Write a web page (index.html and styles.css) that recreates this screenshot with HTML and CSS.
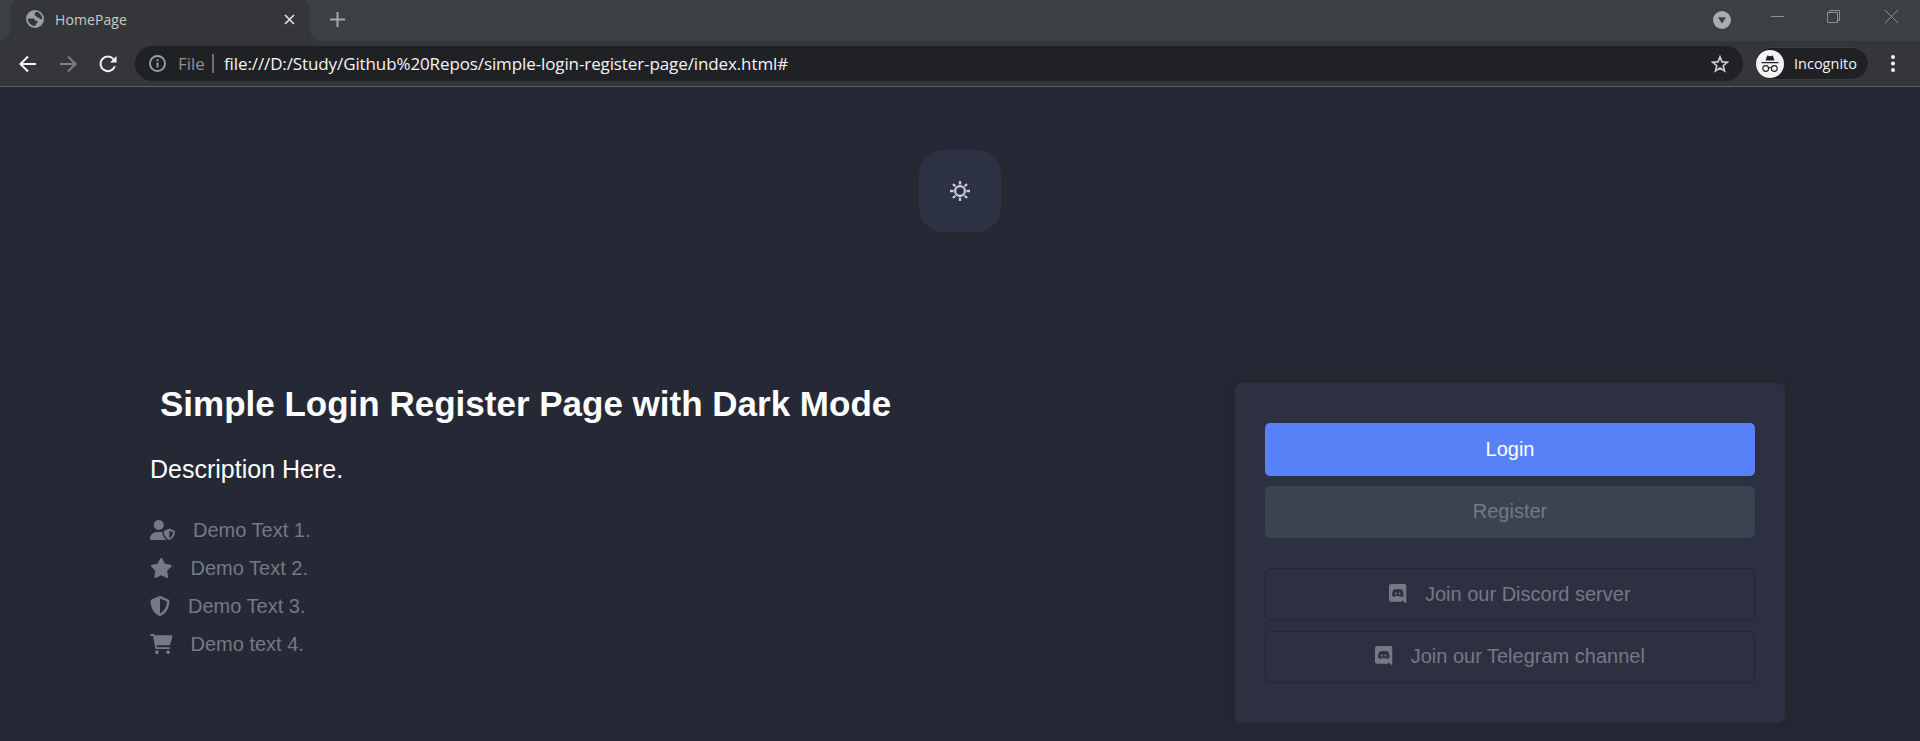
FILE: index.html
```html
<!DOCTYPE html>
<html lang="en">
<head>
<meta charset="utf-8">
<title>HomePage</title>
<link rel="stylesheet" href="styles.css">
</head>
<body>
<svg class="defs" width="0" height="0">
  <symbol id="discord" viewBox="0 0 448 512"><path d="M297.216 243.2c0 15.616-11.52 28.416-26.112 28.416-14.336 0-26.112-12.8-26.112-28.416s11.52-28.416 26.112-28.416c14.592 0 26.112 12.8 26.112 28.416zm-119.552-28.416c-14.592 0-26.112 12.8-26.112 28.416s11.776 28.416 26.112 28.416c14.592 0 26.112-12.8 26.112-28.416.256-15.616-11.52-28.416-26.112-28.416zM448 52.736V512c-64.494-56.994-43.868-38.128-118.784-107.776l13.568 47.36H52.48C23.552 451.584 0 428.032 0 398.848V52.736C0 23.552 23.552 0 52.48 0h343.04C424.448 0 448 23.552 448 52.736zm-72.96 242.688c0-82.432-36.864-149.248-36.864-149.248-36.864-27.648-71.936-26.88-71.936-26.88l-3.584 4.096c43.52 13.312 63.744 32.512 63.744 32.512-60.811-33.329-132.244-33.335-191.232-7.424-9.472 4.352-15.104 7.424-15.104 7.424s21.248-20.224 67.328-33.536l-2.56-3.072s-35.072-.768-71.936 26.88c0 0-36.864 66.816-36.864 149.248 0 0 21.504 37.12 78.08 38.912 0 0 9.472-11.52 17.152-21.248-32.512-9.728-44.8-30.208-44.8-30.208 3.766 2.636 9.976 6.053 10.496 6.4 43.21 24.198 104.588 32.126 159.744 8.96 8.96-3.328 18.944-8.192 29.44-15.104 0 0-12.8 20.992-46.336 30.464 7.68 9.728 16.896 20.736 16.896 20.736 56.576-1.792 78.336-38.912 78.336-38.912z"/></symbol>
</svg>

<header class="tabs">
  <div class="tab">
    <svg class="globe" viewBox="0 0 18 18"><circle cx="9" cy="9" r="9" fill="#9aa0a6"/><path fill="#35363a" d="M10 1.800c3.500.6 6.200 3.400 6.200 7.200-1.500.500-2.700 0-3.200-1.500-1.500.300-2.700-.3-2.700-1.500L8.800 5.500 8.500 4zM1.800 8.500H7c1.500 0 2 1 2 2.200h2.500c.7 1.500-.5 2.800-1.800 3v2.300C5.500 16.300 1.800 13 1.800 8.500z"/></svg>
    <span class="tab-title">HomePage</span>
    <svg class="tab-close" viewBox="0 0 11 11"><path d="M1 1l9 9M10 1l-9 9"/></svg>
  </div>
  <svg class="new-tab" viewBox="0 0 15 15"><path d="M7.500 0v15M0 7.500h15"/></svg>
  <div class="window-controls">
    <svg class="badge" width="18" height="18" viewBox="0 0 18 18"><circle cx="9" cy="9" r="9" fill="#a9acb1"/><path d="M5 6.200h8L9 12.500z" fill="#3c4043"/></svg>
    <svg class="minimize" width="13" height="13" viewBox="0 0 13 13"><path d="M0 6.500h13"/></svg>
    <svg class="restore" width="13" height="13" viewBox="0 0 13 13"><path d="M.5 2.500h10v10H.5zM2.500 2.500v-2h10v10h-2"/></svg>
    <svg class="close" width="13" height="13" viewBox="0 0 13 13"><path d="M0 0l13 13M13 0L0 13"/></svg>
  </div>
</header>

<nav class="toolbar">
  <svg class="nav-icon back" viewBox="0 0 18 18"><path d="M17 9H2M9 1.500L1.500 9 9 16.500"/></svg>
  <svg class="nav-icon forward" viewBox="0 0 18 18"><path d="M1 9h15M9 1.500L16.500 9 9 16.500"/></svg>
  <svg class="nav-icon reload" viewBox="0 0 18 18"><path d="M15.800 11.200A7.300 7.300 0 1 1 14.500 4.200"/><path class="solid" d="M17.500 1v6.500H11z"/></svg>
  <div class="address">
    <svg class="info" viewBox="0 0 17 17"><circle cx="8.500" cy="8.500" r="7.500"/><path d="M8.500 7.500v5M8.500 4.300v2"/></svg>
    <span class="scheme">File</span>
    <span class="divider"></span>
    <span class="url">file:///D:/Study/Github%20Repos/simple-login-register-page/index.html#</span>
    <svg class="bookmark" viewBox="0 0 18 18"><path d="M9 1.900l2 5 5.300.4-4.100 3.400 1.300 5.300L9 13.100 4.500 16l1.300-5.300L1.700 7.300 7 6.900z"/></svg>
  </div>
  <div class="profile">
    <svg class="incognito" viewBox="0 0 28 28"><circle cx="14" cy="14" r="14" fill="#f1f3f4"/><path d="M9.500 10.500l1.700-5 2.800.7 2.800-.7 1.700 5zM5.500 12h17v1.300h-17z" fill="#202124"/><g fill="none" stroke="#202124" stroke-width="1.100"><circle cx="9.700" cy="18.500" r="2.900"/><circle cx="18.300" cy="18.500" r="2.900"/><path d="M12.500 18q1.500-1 3 0"/></g></svg>
    <span>Incognito</span>
  </div>
  <svg class="menu" viewBox="0 0 4 17"><circle cx="2" cy="2" r="2"/><circle cx="2" cy="8.500" r="2"/><circle cx="2" cy="15" r="2"/></svg>
</nav>

<main class="page">
  <button class="theme-toggle" aria-label="Toggle theme">
    <svg viewBox="0 0 20 20"><circle cx="10" cy="10" r="4.900"/><path d="M10 0v3.500M10 16.500V20M0 10h3.500M16.500 10H20M3 3l2.300 2.300M14.700 14.700L17 17M3 17l2.300-2.300M14.700 5.300L17 3"/></svg>
  </button>
  <div class="content">
    <section class="intro">
      <h1>Simple Login Register Page with Dark Mode</h1>
      <p class="description">Description Here.</p>
      <ul class="features">
        <li><svg width="25" height="20" viewBox="0 0 640 512"><path d="M224 256A128 128 0 1 0 224 0a128 128 0 1 0 0 256zm-45.700 48C79.800 304 0 383.800 0 482.300C0 498.700 13.300 512 29.700 512H418.300c1.800 0 3.500-.2 5.300-.5c-76.300-55.100-99.800-141-103.100-200.200c-16.100-4.800-33.100-7.300-50.700-7.300H178.300zm308.800-78.300l-120 48C358 277.400 352 286.200 352 296c0 63.300 25.900 168.800 134.800 214.200c5.900 2.500 12.600 2.500 18.500 0C614.100 464.800 640 359.300 640 296c0-9.800-6-18.600-15.100-22.300l-120-48c-5.700-2.300-12.100-2.300-17.800 0zM591.400 312c-3.900 50.700-27.200 116.700-95.400 149.700V273.800L591.400 312z"/></svg><span>Demo Text 1.</span></li>
        <li><svg width="22.5" height="20" viewBox="0 0 576 512"><path d="M316.900 18C311.600 7 300.400 0 288.100 0s-23.400 7-28.800 18L195 150.300 51.400 171.500c-12 1.800-22 10.200-25.700 21.700s-.7 24.200 7.900 32.700L137.800 329 113.200 474.700c-2 12 3 24.200 12.900 31.300s23 8 33.800 2.300l128.300-68.500 128.300 68.500c10.800 5.700 23.900 4.900 33.800-2.300s14.900-19.300 12.900-31.300L438.500 329 542.700 225.900c8.600-8.500 11.700-21.200 7.900-32.700s-13.700-19.900-25.700-21.700L381.200 150.300 316.900 18z"/></svg><span>Demo Text 2.</span></li>
        <li><svg width="20" height="20" viewBox="0 0 512 512"><path d="M256 0c4.600 0 9.200 1 13.400 2.900L457.700 82.800c22 9.300 38.400 31 38.300 57.200c-.5 99.200-41.300 280.700-213.600 363.200c-16.700 8-36.100 8-52.800 0C57.300 420.700 16.500 239.200 16 140c-.1-26.200 16.300-47.900 38.300-57.200L242.700 2.900C246.800 1 251.400 0 256 0zm0 66.800V444.800C394 378 431.100 230.100 432 141.400L256 66.800z"/></svg><span>Demo Text 3.</span></li>
        <li><svg width="22.5" height="20" viewBox="0 0 576 512"><path d="M96 0C107.500 0 117.400 8.190 119.600 19.510L121.100 32H541.800C562.100 32 578.300 52.250 572.600 72.660L518.600 264.700C514.700 278.500 502.100 288 487.800 288H170.700L179.900 336H488C501.300 336 512 346.700 512 360C512 373.300 501.300 384 488 384H159.100C148.500 384 138.600 375.800 136.400 364.500L76.140 48H24C10.750 48 0 37.250 0 24C0 10.750 10.750 0 24 0H96zM128 464C128 437.500 149.500 416 176 416C202.500 416 224 437.500 224 464C224 490.500 202.500 512 176 512C149.500 512 128 490.500 128 464zM512 464C512 490.500 490.500 512 464 512C437.500 512 416 490.500 416 464C416 437.500 437.500 416 464 416C490.500 416 512 437.500 512 464z"/></svg><span>Demo text 4.</span></li>
      </ul>
    </section>
    <aside class="card">
      <a class="btn primary">Login</a>
      <a class="btn secondary">Register</a>
      <a class="btn outline first"><svg width="17.5" height="20"><use href="#discord"/></svg><span>Join our Discord server</span></a>
      <a class="btn outline"><svg width="17.5" height="20"><use href="#discord"/></svg><span>Join our Telegram channel</span></a>
    </aside>
  </div>
</main>
</body>
</html>
```
FILE: styles.css
```css
* { box-sizing: border-box; }
body { margin: 0; height: 741px; overflow: hidden; background: #252935; display: flex; flex-direction: column; font-family: "Liberation Sans", Arial, sans-serif; }
svg { display: block; flex: none; }
.defs { position: absolute; }

.tabs { height: 41px; flex: none; display: flex; background: #3c4043; padding-left: 10px; font-family: "Open Sans", "Noto Sans", sans-serif; }
.tab { width: 300px; height: 41px; background: #35363a; border-radius: 9px 9px 0 0; display: flex; align-items: center; padding: 0 14px 3px 16px; position: relative; }
.tab::before, .tab::after { content: ""; position: absolute; bottom: 0; width: 10px; height: 10px; }
.tab::before { left: -10px; background: radial-gradient(circle at 0 0, #3c4043 9.500px, #35363a 10px); }
.tab::after { right: -10px; background: radial-gradient(circle at 100% 0, #3c4043 9.500px, #35363a 10px); }
.globe { width: 18px; height: 18px; }
.tab-title { margin-left: 11px; flex: 1; font-size: 14px; color: #c6c8cc; letter-spacing: 0.1px; }
.tab-close { width: 11px; height: 11px; margin-right: 1px; fill: none; stroke: #dfe1e5; stroke-width: 1.700; }
.new-tab { width: 15px; height: 15px; margin: 12px 0 0 20px; stroke: #a5a8ac; stroke-width: 2; }
.window-controls { margin: 0 22px 0 auto; display: flex; fill: none; stroke: #8e9194; stroke-width: 1; }
.badge { margin: 11px 40px 0 0; stroke: none; }
.minimize { margin: 10px 43px 0 0; }
.restore { margin: 10px 45px 0 0; }
.close { margin-top: 10px; }

.toolbar { height: 46px; flex: none; display: flex; align-items: center; background: #35363a; border-bottom: 1px solid #5c5d60; padding: 0 25px 0 19px; font-family: "Open Sans", "Noto Sans", sans-serif; }
.nav-icon { width: 18px; height: 18px; fill: none; stroke: #f1f3f4; stroke-width: 2; }
.forward { margin-left: 22px; stroke: #7d7e82; }
.reload { margin-left: 22px; }
.reload .solid { fill: #f1f3f4; stroke: none; }
.address { width: 1608px; height: 35px; margin-left: 18px; border-radius: 18px; background: #202124; display: flex; align-items: center; padding: 0 14px; font-size: 17px; white-space: nowrap; }
.info { width: 17px; height: 17px; fill: none; stroke: #9aa0a6; stroke-width: 1.900; }
.scheme { margin-left: 12px; width: 26px; color: #8d9196; }
.divider { width: 2px; height: 19px; margin: 0 10px 0 8px; background: #6d7074; }
.url { flex: 1; color: #f4f5f6; letter-spacing: -0.11px; }
.bookmark { width: 18px; height: 18px; fill: none; stroke: #c8c9cc; stroke-width: 1.700; }
.profile { width: 115px; height: 33px; margin-left: 11px; border-radius: 17px; border: 1px solid #3c3d41; background: #202124; display: flex; align-items: center; color: #f4f5f6; font-size: 14.500px; padding-left: 1px; }
.incognito { width: 28px; height: 28px; }
.profile span { margin-left: 10px; }
.menu { width: 4px; height: 17px; margin-left: auto; fill: #f1f3f4; }

.page { flex: 1; display: flex; flex-direction: column; padding: 63px 135px 0 150px; }
.theme-toggle { width: 82px; height: 82px; margin-left: 769px; padding: 0; border: 0; border-radius: 24px; background: #2d3144; display: flex; align-items: center; justify-content: center; }
.theme-toggle svg { width: 20px; height: 20px; fill: none; stroke: #c9ccd3; stroke-width: 2.300; }
.content { display: flex; justify-content: space-between; align-items: flex-start; margin-top: 151px; }
h1 { margin: 0; padding-left: 10px; font-size: 35px; line-height: 41px; color: #fff; white-space: nowrap; }
.description { margin: 30px 0 0; font-size: 25px; line-height: 30px; color: #fff; }
.features { list-style: none; margin: 27px 0 0; padding: 0; font-size: 20px; line-height: 38px; color: #747985; }
.features li { display: flex; align-items: center; height: 38px; }
.features svg, .outline svg { fill: currentColor; margin: 0 18px 1px 0; }
.card { width: 550px; height: 340px; padding: 40px 30px; border-radius: 7px; background: #2d3040; box-shadow: 0 0 0 11px #232731; }
.btn { display: flex; align-items: center; justify-content: center; height: 52.500px; margin-bottom: 10px; border-radius: 5px; font-size: 20px; color: #747985; }
.primary { background: #5881f8; color: #fff; }
.secondary { background: #3c4350; }
.outline { border: 1px solid #222532; }
.first { margin-top: 30px; }
```
